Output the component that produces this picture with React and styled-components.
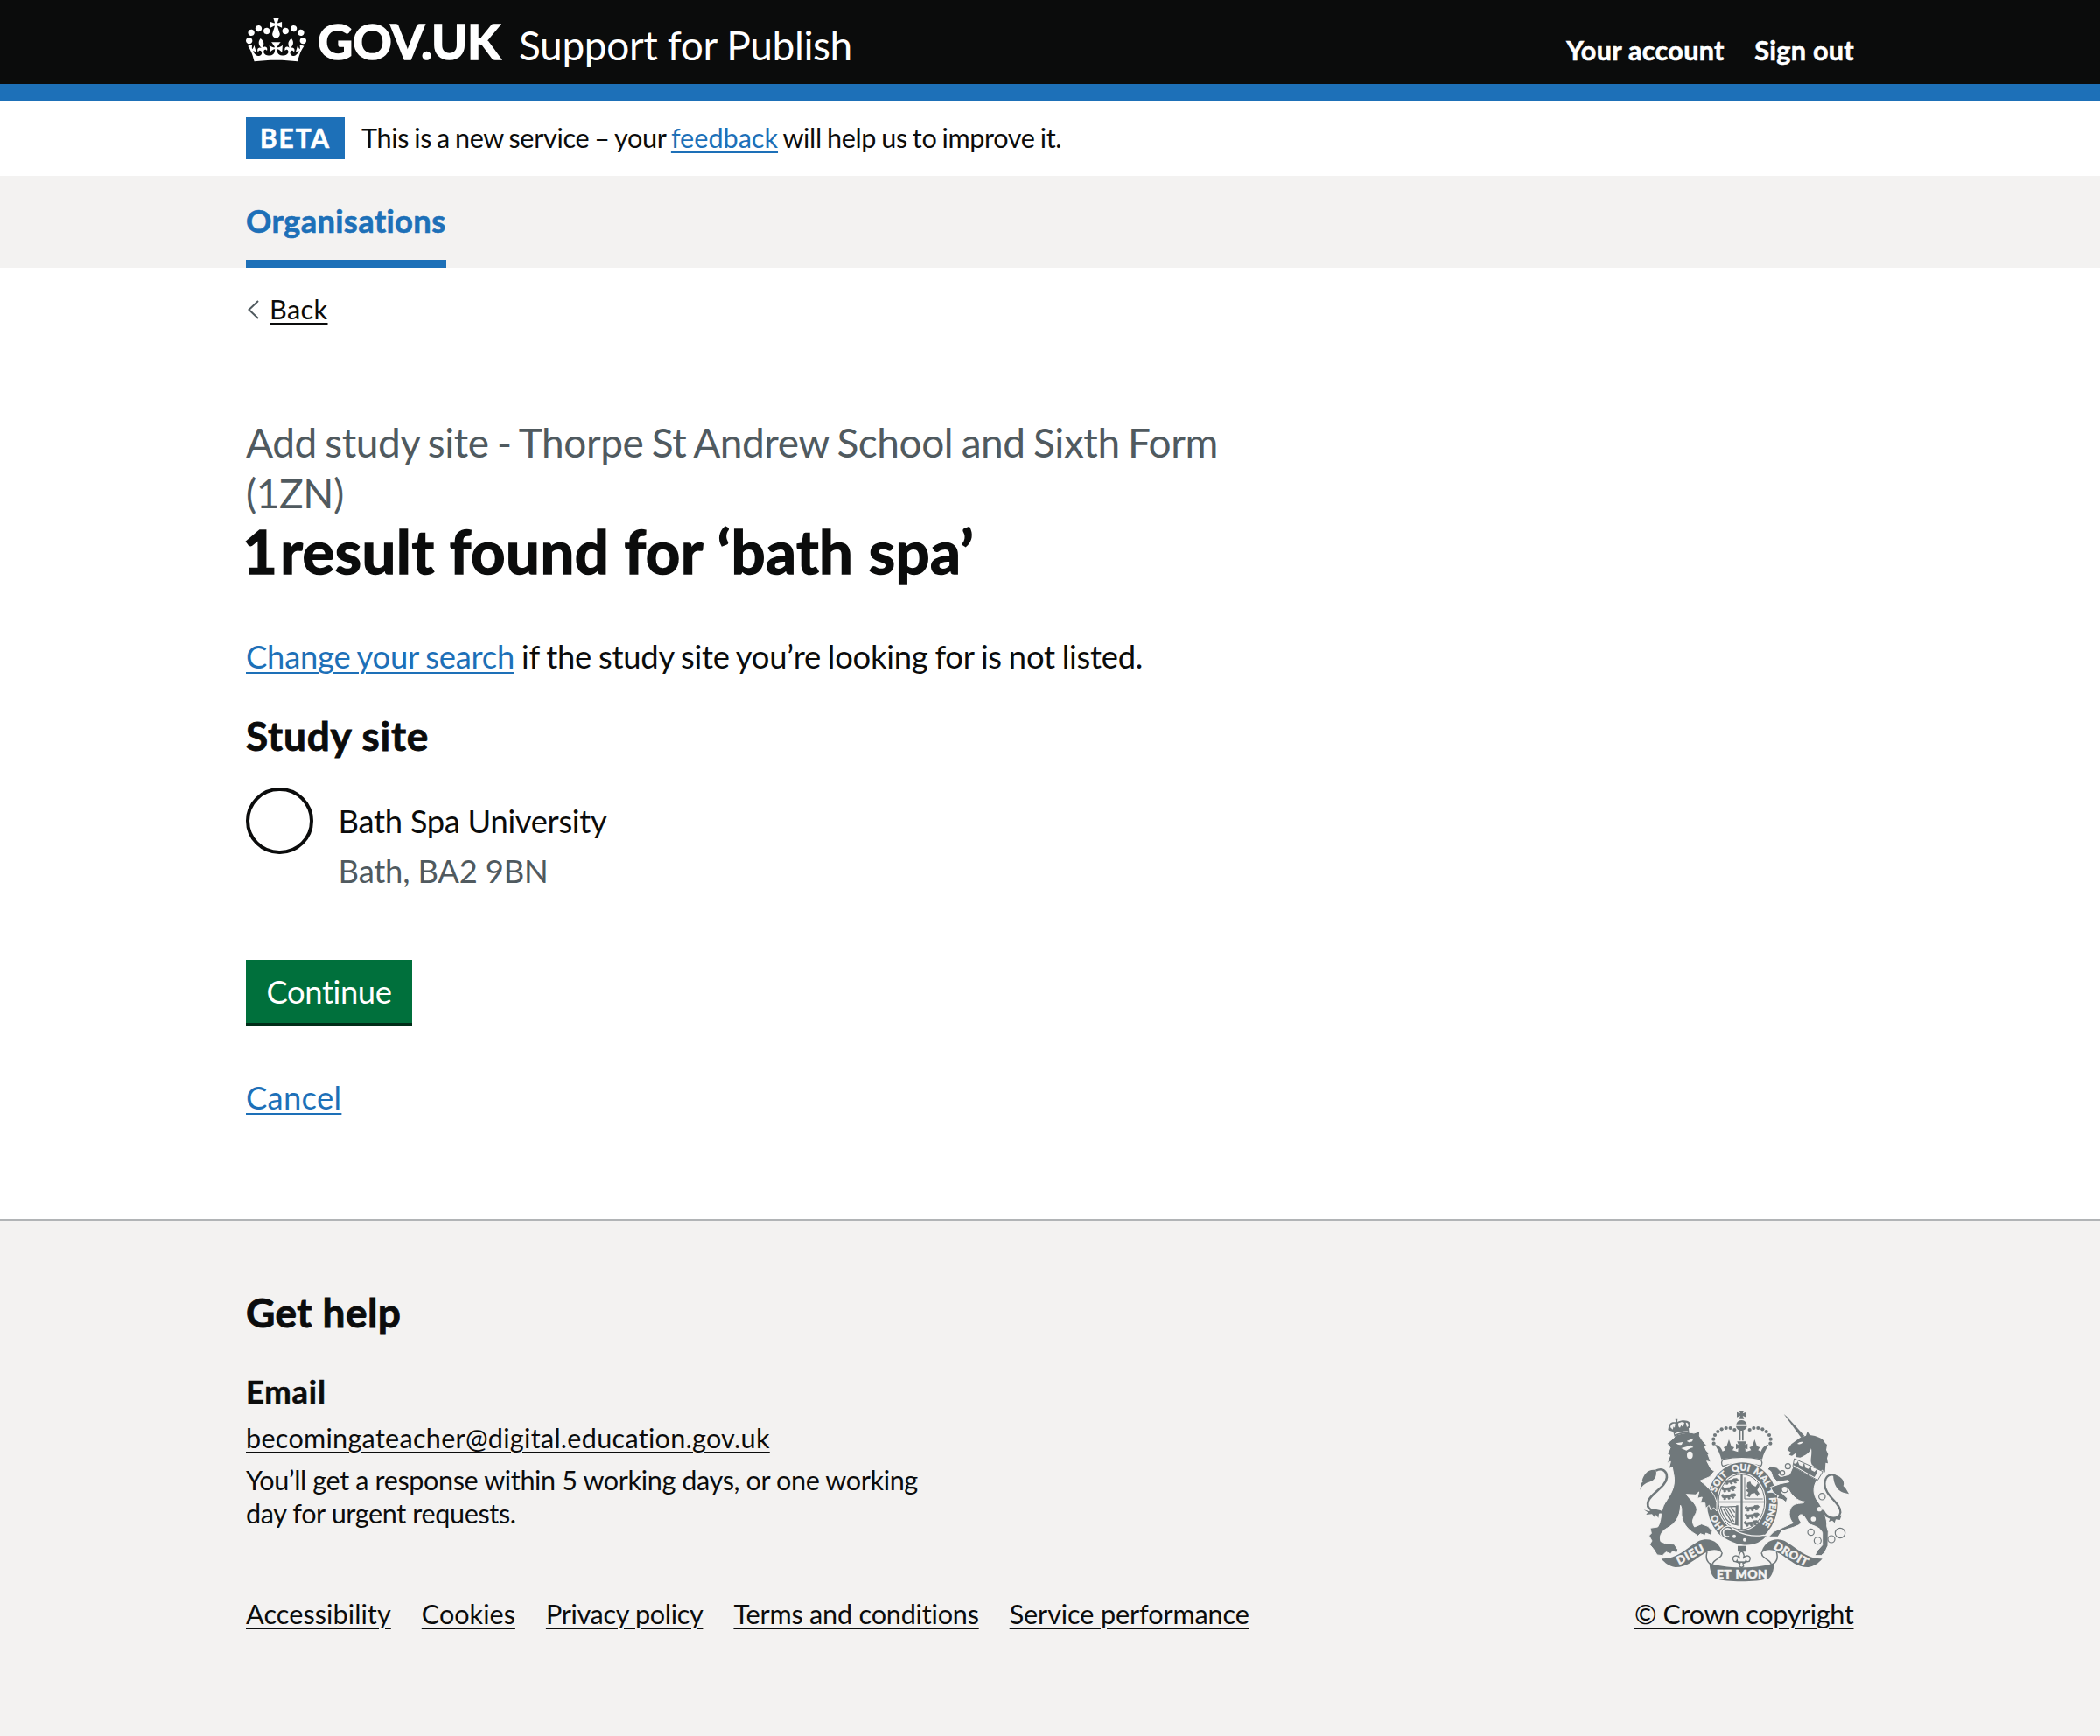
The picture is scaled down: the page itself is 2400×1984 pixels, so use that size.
import React from "react";
import styled, { createGlobalStyle, css } from "styled-components";

const colour = {
  ink: "#0b0c0c",
  brand: "#1d70b8",
  muted: "#505a5f",
  panel: "#f3f2f1",
  crest: "#70787b",
};

const type = {
  s: css`font-size: 30.6px; line-height: 38.3px;`,
  m: css`font-size: 36.4px; line-height: 47.9px;`,
  l: css`font-size: 46px; line-height: 57.4px;`,
  xl: css`font-size: 68.9px; line-height: 76.6px;`,
};

const GlobalStyle = createGlobalStyle`
  *, *::before, *::after { box-sizing: border-box; }
  body {
    margin: 0;
    background: ${colour.panel};
    color: ${colour.ink};
    font-family: Lato, Roboto, "Liberation Sans", sans-serif;
    overflow-x: hidden;
  }
  h1, h2, h3, p, ul { margin: 0; padding: 0; }
  ul { list-style: none; }
`;

const Page = styled.div`
  height: 1984px;
  display: flex;
  flex-direction: column;
  background: #fff;
`;

const Width = styled.div`
  width: 1838px;
  margin: 0 auto;
`;

const Link = styled.a`
  color: ${(p) => (p.$dark ? colour.ink : colour.brand)};
  letter-spacing: ${(p) => p.$track || 0}px;
  text-decoration: underline;
  text-decoration-thickness: 2px;
  text-underline-offset: 3.5px;
  white-space: nowrap;
`;

const Strong = css`
  font-weight: 700;
  -webkit-text-stroke: 0.6px currentColor;
`;

/* Header */
const Header = styled.header`
  height: 115px;
  background: ${colour.ink};
  border-bottom: 19px solid ${colour.brand};
  color: #fff;
`;

const HeaderRow = styled(Width)`
  display: flex;
  align-items: flex-start;
`;

const Crown = styled.svg`
  width: 69px;
  height: 51px;
  margin-top: 20px;
`;

const LogoText = styled.span`
  ${Strong}
  -webkit-text-stroke-width: 1.6px;
  margin: 19px 0 0 13px;
  width: 230px;
  font-size: 55.5px;
  line-height: 56px;
  letter-spacing: -0.2px;
`;

const ServiceName = styled.span`
  margin-top: 28px;
  font-size: 46px;
  line-height: 48px;
  letter-spacing: -0.38px;
  flex: 1;
`;

const HeaderNav = styled.nav`
  display: flex;
  gap: 34.5px;
  margin-top: 38.5px;
`;

const HeaderLink = styled.a`
  ${type.s}
  ${Strong}
  letter-spacing: 0.28px;
`;

/* Phase banner */
const PhaseBanner = styled(Width)`
  height: 86px;
  display: flex;
  align-items: center;
  gap: 19px;
`;

const Tag = styled.strong`
  ${Strong}
  width: 113px;
  height: 48px;
  background: ${colour.brand};
  color: #fff;
  font-size: 29.8px;
  line-height: 48px;
  letter-spacing: 1.9px;
  text-align: center;
`;

const PhaseText = styled.p`
  ${type.s}
  letter-spacing: -0.33px;
  word-spacing: -1.5px;
`;

/* Primary navigation */
const PrimaryNav = styled.nav`
  height: 105px;
  background: ${colour.panel};
`;

const NavItem = styled.a`
  ${type.m}
  ${Strong}
  display: inline-block;
  height: 105px;
  padding-top: 28px;
  border-bottom: 9.5px solid ${colour.brand};
  color: ${colour.brand};
  letter-spacing: 0.32px;
`;

/* Main content */
const Content = styled(Width)`
  height: 1087px;
  padding-top: 29px;
`;

const BackRow = styled.div`
  ${type.s}
  display: flex;
  align-items: center;
  gap: 12px;
`;

const Chevron = styled.svg`
  width: 15px;
  height: 22px;
`;

const Column = styled.div`
  width: 1210px;
`;

const Caption = styled.span`
  ${type.l}
  display: block;
  margin-top: 104px;
  color: ${colour.muted};
  letter-spacing: -0.45px;
  word-spacing: -1.9px;
`;

const Title = styled.h1`
  ${type.xl}
  ${Strong}
  -webkit-text-stroke-width: 1.5px;
  letter-spacing: 0.48px;
`;

const Numeral = styled.span`
  margin-left: -4px;
  letter-spacing: -13.9px;
`;

const Lead = styled.p`
  ${type.m}
  margin-top: 58.5px;
  letter-spacing: -0.25px;
  word-spacing: -1.1px;
`;

const GroupTitle = styled.h2`
  ${type.l}
  ${Strong}
  -webkit-text-stroke-width: 0.9px;
  margin-top: ${(p) => p.$top}px;
  letter-spacing: ${(p) => p.$track}px;
`;

const Option = styled.label`
  display: flex;
  gap: 29px;
  margin-top: 30.5px;
`;

const Radio = styled.span`
  width: 76.6px;
  height: 76.6px;
  border: 4px solid ${colour.ink};
  border-radius: 50%;
`;

const OptionText = styled.span`
  ${type.m}
  padding-top: 15.5px;
  letter-spacing: -0.33px;
`;

const Hint = styled.span`
  display: block;
  margin-top: 9.4px;
  color: ${colour.muted};
  letter-spacing: -0.2px;
`;

const Button = styled.button`
  ${type.m}
  display: block;
  width: 190px;
  height: 76px;
  margin-top: 76.5px;
  padding: 0 0 1px;
  border: 0;
  background: #00703c;
  box-shadow: inset 0 -4px 0 #002d18;
  color: #fff;
  font-family: inherit;
  letter-spacing: -0.4px;
`;

const Actions = styled.p`
  ${type.m}
  margin-top: 58px;
`;

/* Footer */
const Footer = styled.footer`
  flex: 1;
  border-top: 2px solid #b1b4b6;
  background: ${colour.panel};
`;

const FooterRow = styled(Width)`
  display: flex;
  justify-content: space-between;
  align-items: flex-end;
  height: 469.5px;
`;

const Help = styled.div`
  ${type.s}
`;

const HelpTitle = styled.h3`
  ${type.m}
  ${Strong}
  margin: 39px 0 10px;
  letter-spacing: 0.8px;
`;

const HelpText = styled.p`
  width: 800px;
  margin-top: 9.7px;
  letter-spacing: -0.38px;
`;

const FooterLinks = styled.ul`
  display: flex;
  gap: 35px;
  margin-top: 76.5px;
`;

const Copyright = styled.div`
  ${type.s}
  width: 251px;
  display: flex;
  flex-direction: column;
  gap: 13px;
`;

const Arms = styled.svg`
  width: 251.67px;
  height: 206.67px;
  font-family: Lato, sans-serif;
`;

function CrownLogo() {
  return (
    <Crown viewBox="0 0 132 97" fill="#fff">
      <path
        fillRule="evenodd"
        d="M25 30.2c3.5 1.5 7.7-.2 9.1-3.7 1.5-3.6-.2-7.8-3.9-9.2-3.6-1.4-7.6.3-9.1 3.9-1.4 3.5.3 7.5 3.9 9zM9 39.5c3.6 1.5 7.8-.2 9.2-3.7 1.5-3.6-.2-7.8-3.9-9.1-3.6-1.5-7.6.2-9.1 3.8-1.4 3.5.3 7.5 3.8 9zM4.4 57.2c3.5 1.5 7.7-.2 9.1-3.8 1.5-3.6-.2-7.7-3.9-9.1-3.5-1.5-7.6.3-9.1 3.8-1.4 3.5.3 7.6 3.9 9.1zm38.3-21.4c3.5 1.5 7.7-.2 9.1-3.8 1.5-3.6-.2-7.7-3.9-9.1-3.6-1.5-7.6.3-9.1 3.8-1.3 3.6.4 7.7 3.9 9.1zm64.4-5.6c-3.6 1.5-7.8-.2-9.1-3.7-1.5-3.6.2-7.8 3.8-9.2 3.6-1.4 7.7.3 9.2 3.9 1.3 3.5-.4 7.5-3.9 9zm15.9 9.3c-3.6 1.5-7.7-.2-9.1-3.7-1.5-3.6.2-7.8 3.7-9.1 3.6-1.5 7.7.2 9.2 3.8 1.5 3.5-.3 7.5-3.8 9zm4.7 17.7c-3.6 1.5-7.8-.2-9.2-3.8-1.5-3.6.2-7.7 3.9-9.1 3.6-1.5 7.7.3 9.2 3.8 1.3 3.5-.4 7.6-3.9 9.1zM89.3 35.8c-3.6 1.5-7.8-.2-9.2-3.8-1.4-3.6.2-7.7 3.9-9.1 3.6-1.5 7.7.3 9.2 3.8 1.4 3.6-.3 7.7-3.9 9.1zM69.7 17.7l8.9 4.7V9.3l-8.9 2.8c-.2-.3-.5-.6-.9-.9L72.4 0H59.6l3.5 11.2c-.3.3-.6.5-.9.9l-8.8-2.8v13.1l8.8-4.7c.3.3.6.7.9.9l-5 15.4v.1c-.2.8-.4 1.6-.4 2.4 0 4.1 3.1 7.5 7 8.1h.2c.3 0 .7.1 1 .1.4 0 .7 0 1-.1h.2c4-.6 7.1-4.1 7.1-8.1 0-.8-.1-1.7-.4-2.4V34l-5.1-15.4c.4-.2.7-.6 1-.9zM66 92.8c16.9 0 32.8 1.1 47.1 3.2 4-16.9 8.9-26.7 14-33.5l-9.6-3.4c1 4.9 1.1 7.2 0 10.2-1.5-1.4-3-4.3-4.2-8.7L108.6 76c2.8-2 5-3.2 7.5-3.3-4.4 9.4-10 11.9-13.6 11.2-4.3-.8-6.3-4.6-5.6-7.9 1-4.7 5.7-5.9 8-.5 4.3-8.7-3-11.4-7.6-8.8 7.1-7.2 7.9-13.5 2.1-21.1-8 6.1-8.1 12.3-4.5 20.8-4.7-5.4-12.1-2.5-9.5 6.2 3.4-5.2 7.9-2 7.2 3.1-.6 4.3-6.4 7.8-13.5 7.2-10.3-.9-10.9-8-11.2-13.8 2.5-.5 7.1 1.8 11 7.3L80.2 60c-4.1 4.4-8 5.3-12.3 5.4 1.4-4.4 8-11.6 8-11.6H55.5s6.4 7.2 7.9 11.6c-4.2-.1-8-1-12.3-5.4l1.4 16.4c3.9-5.5 8.5-7.7 10.9-7.3-.3 5.8-.9 12.8-11.1 13.8-7.2.6-12.9-2.9-13.5-7.2-.7-5 3.8-8.3 7.1-3.1 2.7-8.7-4.6-11.6-9.4-6.2 3.7-8.5 3.6-14.7-4.6-20.8-5.8 7.6-5 13.9 2.2 21.1-4.7-2.6-11.9.1-7.7 8.8 2.3-5.5 7.1-4.2 8.1.5.7 3.3-1.3 7.1-5.7 7.9-3.5.7-9-1.8-13.5-11.2 2.5.1 4.7 1.3 7.5 3.3l-4.7-15.4c-1.2 4.4-2.7 7.2-4.3 8.7-1.1-3-.9-5.3 0-10.2l-9.5 3.4c5 6.9 9.9 16.7 14 33.5 14.8-2.1 30.8-3.2 47.7-3.2z"
      />
    </Crown>
  );
}

const beads = [
  [327, 178], [326, 163], [331, 149], [341, 137], [354, 129], [369, 125], [384, 125], [398, 131],
];
const chainRings = [
  [86, 196, 9], [67, 219, 8], [75, 275, 11], [203, 300, 11],
  [165, 422, 11], [188, 451, 12], [235, 446, 12], [265, 425, 17],
];
const motto = [
  ["HO", 96], ["SOIT", 232], ["QUI", 316], ["MAL", 392], ["Y", 444], ["PENSE", 512],
];

function PassantLion({ x, y }) {
  return (
    <path
      transform={`translate(${x} ${y})`}
      stroke={colour.crest}
      strokeWidth="2.5"
      d="M2 10c-4-4 0-10 4-8l-2 5 8-1 16-2 4-4 12-1 5 4-3 5-7 1 4 5-6 1-4-5-6 1 2 6-6 1-2-6-8 1 1 5-7 1 1-6-5-1z"
    />
  );
}

function RibbonSide() {
  return (
    <g>
      <path d="M147 573C200 575 235 536 276 512C315 496 350 518 357 556C345 541 322 539 304 550C268 566 242 603 195 602C175 599 160 589 147 573Z" />
      <path
        fill="none"
        stroke={colour.crest}
        strokeWidth="4.5"
        d="M304 550C298 570 304 584 316 592M355 552C358 572 328 572 322 592"
      />
    </g>
  );
}

function RoyalArms() {
  const light = colour.panel;
  return (
    <Arms viewBox="55 50 755 620" fill={colour.crest}>
      {/* imperial crown */}
      <path d="M413 65h18l-5 10 12-5v18l-12-5 5 11h-18l5-11-12 5v-18l12 5z" />
      <path d="M404 112c3-10 10-14 18-14s15 4 18 14z" />
      <path d="M403 118h38c-2 9-7 13-12 14v36h-5v-34h-5v34h-5v-36c-5-1-9-5-11-14z" />
      {beads.map(([x, y]) => (
        <g key={x + "-" + y}>
          <circle cx={x} cy={y} r="6.3" />
          <circle cx={848 - x} cy={y} r="6.3" />
        </g>
      ))}
      <path d="M331 182C345 184 352 192 357 205L367 201L361 191L371 187L379 164L387 187L397 191L391 201L410 207L411 194L403 198V178L412 183L407 171H439L434 183L443 178V198L435 194L436 207L455 201L449 191L459 187L467 164L475 187L485 191L479 201L489 205C494 192 501 184 515 182C506 198 497 214 493 232C450 222 396 222 353 232C349 214 340 198 331 182Z" />
      <path
        d="M360 232c40-9 86-9 126 0 8 6 8 16 2 24-40-13-90-13-130 0-6-8-6-18 2-24z"
        fill={light}
        stroke={colour.crest}
        strokeWidth="4"
      />

      {/* garter */}
      <ellipse cx="425" cy="383" rx="125" ry="144" fill={light} />
      <ellipse cx="425" cy="383" rx="121" ry="140" />
      <ellipse cx="422" cy="378" rx="84" ry="100" fill={light} />
      <ellipse cx="422" cy="378" rx="79" ry="95" fill="none" stroke={colour.crest} strokeWidth="3" />
      <path id="garter-line" fill="none" d="M424 491A94 110 0 0 1 424 271A94 110 0 0 1 424 491" />
      <g fill={light} stroke={light} strokeWidth="1.2" fontSize="31.5" fontWeight="900" textAnchor="middle">
        {motto.map(([word, at]) => (
          <text key={word}>
            <textPath href="#garter-line" startOffset={at}>{word}</textPath>
          </text>
        ))}
      </g>

      {/* quartered shield */}
      <path d="M419 283h7v190h-7zM342 376h160v5H342z" />
      <path d="M433 294v74h62" fill="none" stroke={colour.crest} strokeWidth="3" />
      <g>
        <PassantLion x={362} y={299} />
        <PassantLion x={354} y={325} />
        <PassantLion x={354} y={351} />
        <PassantLion x={434} y={391} />
        <PassantLion x={434} y={417} />
        <PassantLion x={431} y={443} />
      </g>
      <path d="M442 312l10-4 4 10 14 8 8-12 6 8-8 16 8 12-8 10-8-12-12 2-6 12-10-4 6-12-10-8 8-4-4-10z" />
      <path
        fill="none"
        stroke={colour.crest}
        strokeWidth="4"
        d="M350 394c18 4 38-2 54 0l-2 62c-26-4-44-28-52-62M366 398l30 48M376 398l22 34M387 397l12 18M360 402l30 48"
      />
      <path d="M404 390h7v70l-8-2z" />

      {/* belt and buckle */}
      <path d="M354 474c12-16 34-16 38-4 26 18 66 30 106 22l14 2c-24 28-58 38-92 32-22-4-40-12-56-22-12-6-18-20-10-30z" stroke={light} strokeWidth="4" />
      <path d="M386 474c-14-10-28 0-26 12 1 8 10 14 20 10" fill="none" stroke={light} strokeWidth="5" />
      <circle cx="397" cy="496" r="6" fill={light} />
      <circle cx="433" cy="508" r="6" fill={light} />

      {/* lion */}
      <g transform="translate(45 60)">
        <path
          stroke={light}
          strokeWidth="3"
          d="M122 118L145 99L150 90C175 82 198 78 214 83L234 76L233 92L243 108L260 128L250 127L256 142L266 152L262 156L272 182L258 178L272 205L284 213L268 232L235 246C262 266 288 292 292 322L292 350L282 338L272 347L266 330L254 340L252 322L236 322L242 302L226 306L231 284L220 294L188 292C200 312 232 330 222 354C214 372 202 382 216 404L240 394L262 402L277 418L272 432L255 425L252 433L236 427L228 435L212 424C196 414 180 396 174 376C168 356 176 344 168 330C166 372 150 392 122 408C104 418 94 432 100 454L120 462L146 463L159 482L155 494L142 486L134 496L118 490L106 502L88 500L74 478L62 464L70 452L60 434L68 426L64 408L90 404C106 380 96 350 116 320C134 292 150 270 146 232L140 200L128 204L134 180L122 186L132 158L123 156L133 132Z"
        />
        <path d="M147 94L143 78L125 72L128 56C136 40 148 46 152 44L150 34H158L157 44C170 38 190 36 200 46L202 62L196 66L198 84C178 82 162 86 147 94Z" />
        <path fill={light} d="M133 62c2-10 10-14 17-12l-2 14-4-4-3 10zM160 49c8-5 16-6 21-2l-5 14-6-6-4 9-5-4zM186 46c7 0 10 5 9 12l-5 4zM148 84c14-6 30-9 46-8v3c-16-1-31 3-45 8z" />
        <path fill={light} d="M152 117l24-4-4 9c-8 2-14 0-20-5zM190 109l22-9-4 11c-7 4-13 3-18-2zM170 134l34-10 8 7-10 3-14 8z" />
        <ellipse cx="200" cy="158" rx="10" ry="13" fill={light} />
        <path d="M112 354C76 354 46 344 58 314C68 288 119 266 121 234C122 212 104 200 84 211" fill="none" stroke={colour.crest} strokeWidth="8" />
        <path d="M28 278C34 262 30 254 40 248L36 246C42 222 58 204 84 209C88 234 76 246 60 250C46 254 36 262 28 278Z" />
        <path d="M42 345L60 350L75 342L102 348L94 360L92 373L84 362L80 372L70 360L50 362L56 354Z" />
      </g>

      {/* unicorn */}
      <g transform="translate(495 60)">
        <path d="M72 17L82 25L143 92L132 99Z" />
        <path d="M84 140L98 120L128 98L148 91L153 76L161 89C185 92 208 100 213 116L220 122L217 140L224 155L220 168L223 186L215 184L213 217L204 208L192 212L168 190C160 176 170 158 166 134C160 150 148 158 128 166L112 164L114 150L100 160L90 157L96 148Z" />
        <path fill={light} d="M118 119c6-6 12-8 20-6-4 6-12 9-20 6z" />
        <path
          stroke={light}
          strokeWidth="3"
          d="M104 196L186 243C170 266 172 298 190 318C206 344 222 376 219 402L224 420L223 468L212 492L200 502L178 502L188 484L204 466L204 424C198 408 182 402 164 396C150 388 146 366 134 362C120 360 120 374 130 386C134 400 92 408 64 418L52 438L20 438L38 420L104 390C88 376 86 344 104 330C120 320 138 326 144 318C116 316 96 292 88 274L62 284L84 306L80 320L68 310L48 306L54 298L36 286L26 268L60 256L90 250L86 244L50 250L34 232L28 214L16 206L26 196L48 200L62 214L54 226L62 232L92 224Z"
        />
        <path fill={light} d="M108 170L206 214L188 244L103 196Z" stroke={colour.crest} strokeWidth="3" />
        <path d="M106 186l8 2 6-10 5 14 10 4 7-11 4 16 10 4 8-10 3 15 10 5 8-8 1 12-9 14L105 192z" />
        {chainRings.map(([x, y, r]) => (
          <circle key={x} cx={x} cy={y} r={r} fill={light} stroke={colour.crest} strokeWidth="3.5" />
        ))}
        <circle cx="194" cy="343" r="8" fill={light} />
        <circle cx="173" cy="377" r="8.5" fill={light} />
        <path d="M206 346C224 384 262 378 266 354C268 322 210 296 212 256C214 226 234 220 250 230" fill="none" stroke={colour.crest} strokeWidth="7" />
        <path d="M241 224C262 226 284 244 276 264L284 272L295 291L276 286C256 280 242 260 241 224Z" />
        <path d="M206 346L222 368L238 374L270 364L264 380L250 378L246 390L238 382L226 386L230 376L214 368Z" />
      </g>

      {/* ribbon */}
      <RibbonSide />
      <g transform="translate(846 0) scale(-1 1)">
        <RibbonSide />
      </g>
      <path d="M312 586C350 608 496 608 534 586C533 614 526 632 516 640C472 654 374 654 332 641C320 632 313 614 312 586Z" />
      <g fill={light} stroke={light} strokeWidth="1.5" fontWeight="900" textAnchor="middle">
        <text x="424" y="640" fontSize="42" wordSpacing="4" letterSpacing="1">ET MON</text>
        <text transform="translate(254 570) rotate(-28)" fontSize="39" letterSpacing="3">DIEU</text>
        <text transform="translate(586 569) rotate(29)" fontSize="39" letterSpacing="1.5">DROIT</text>
      </g>
      <path d="M409 529h29v20h-10v8h-9v-8h-10z" />
      <path
        d="M422 546c-12 12-10 20-5 26-12-16-27-8-24 4 2 9 12 9 14 3 2 8 8 10 10 10l-2 10 7 5 7-5-2-10c3 0 8-2 10-10 2 6 13 6 14-3 3-12-12-20-24-4 5-6 7-14-5-26z"
        fill={light}
        stroke={colour.crest}
        strokeWidth="4"
      />
      <path d="M404 582h36v5h-36z" />
    </Arms>
  );
}

const footerLinks = [
  ["Accessibility", 0.08],
  ["Cookies", 0],
  ["Privacy policy", -0.33],
  ["Terms and conditions", -0.2],
  ["Service performance", -0.12],
];

export default function App() {
  return (
    <Page>
      <GlobalStyle />
      <Header>
        <HeaderRow>
          <CrownLogo />
          <LogoText>GOV.UK</LogoText>
          <ServiceName>Support for Publish</ServiceName>
          <HeaderNav>
            <HeaderLink>Your account</HeaderLink>
            <HeaderLink>Sign out</HeaderLink>
          </HeaderNav>
        </HeaderRow>
      </Header>
      <PhaseBanner>
        <Tag>BETA</Tag>
        <PhaseText>
          This is a new service – your <Link $track={0}>feedback</Link> will help us to improve it.
        </PhaseText>
      </PhaseBanner>
      <PrimaryNav>
        <Width>
          <NavItem>Organisations</NavItem>
        </Width>
      </PrimaryNav>
      <Content as="main">
        <BackRow>
          <Chevron viewBox="0 0 15 22" fill="none" stroke={colour.muted} strokeWidth="2">
            <path d="M14 1L3.5 11L14 21" />
          </Chevron>
          <Link $dark $track={0.4}>Back</Link>
        </BackRow>
        <Column>
          <Caption>Add study site - Thorpe St Andrew School and Sixth Form (1ZN)</Caption>
          <Title><Numeral>1</Numeral> result found for ‘bath spa’</Title>
          <Lead>
            <Link $track={-0.24}>Change your search</Link> if the study site you’re looking for is not listed.
          </Lead>
          <GroupTitle $top={36.5} $track={0.8}>Study site</GroupTitle>
          <Option>
            <Radio />
            <OptionText>
              Bath Spa University
              <Hint>Bath, BA2 9BN</Hint>
            </OptionText>
          </Option>
          <Button>Continue</Button>
          <Actions>
            <Link $track={0.3}>Cancel</Link>
          </Actions>
        </Column>
      </Content>
      <Footer>
        <FooterRow>
          <Help>
            <GroupTitle $top={0} $track={0.45}>Get help</GroupTitle>
            <HelpTitle>Email</HelpTitle>
            <Link $dark $track={0.27}>becomingateacher@digital.education.gov.uk</Link>
            <HelpText>You’ll get a response within 5 working days, or one working day for urgent requests.</HelpText>
            <FooterLinks>
              {footerLinks.map(([label, track]) => (
                <li key={label}>
                  <Link $dark $track={track}>{label}</Link>
                </li>
              ))}
            </FooterLinks>
          </Help>
          <Copyright>
            <RoyalArms />
            <Link $dark $track={-0.36}>© Crown copyright</Link>
          </Copyright>
        </FooterRow>
      </Footer>
    </Page>
  );
}
